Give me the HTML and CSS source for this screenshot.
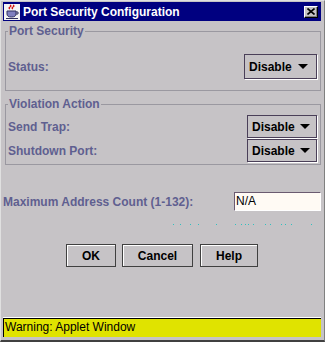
FILE: index.html
```html
<!DOCTYPE html>
<html lang="en">
<head>
  <meta charset="UTF-8" />
  <title>Port Security Configuration</title>
  <link rel="stylesheet" href="styles.css">
</head>
<body>
  <div class="window">
    <div class="titlebar">
      <svg class="app-icon" width="16" height="16" viewBox="0 0 16 16">
        <rect x="0" y="0" width="16" height="16" fill="#f4f4f4"/>
        <path d="M6 1 q2 1 0 2 q-2 1 0 2 M9 1 q2 1 0 2 q-2 1 0 2" stroke="#d00000" stroke-width="1.2" fill="none"/>
        <path d="M3 7 h9 v3 q0 3 -4.5 3 q-4.5 0 -4.5 -3 z" fill="#8080c0" stroke="#303060" stroke-width="1"/>
        <path d="M12 8 h2 v2 h-2" fill="none" stroke="#303060" stroke-width="1"/>
        <rect x="2" y="14" width="12" height="1" fill="#303060"/>
      </svg>
      <span class="title">Port Security Configuration</span>
      <span class="close-btn">
        <svg width="8" height="7" viewBox="0 0 8 7"><path d="M0.5 0.5 L7.5 6.5 M7.5 0.5 L0.5 6.5" stroke="#000" stroke-width="1.6"/></svg>
      </span>
    </div>

    <div class="content">
      <fieldset class="group group-port">
        <legend>Port Security</legend>
        <div class="row">
          <span class="label">Status:</span>
          <span class="combo combo-wide">Disable <i class="arrow"></i></span>
        </div>
      </fieldset>

      <fieldset class="group group-violation">
        <legend>Violation Action</legend>
        <div class="row row-tight">
          <span class="label">Send Trap:</span>
          <span class="combo">Disable <i class="arrow"></i></span>
        </div>
        <div class="row row-tight">
          <span class="label">Shutdown Port:</span>
          <span class="combo">Disable <i class="arrow"></i></span>
        </div>
      </fieldset>

      <div class="row row-max">
        <span class="label">Maximum Address Count (1-132):</span>
        <span class="textfield">N/A</span>
      </div>

      <div class="dots">
        <svg width="148" height="1" viewBox="0 0 148 1">
          <g fill="#30c0c0">
            <rect x="2" y="0" width="1" height="1"/>
            <rect x="9" y="0" width="1" height="1"/>
            <rect x="19" y="0" width="1" height="1"/>
            <rect x="27" y="0" width="1" height="1"/>
            <rect x="45" y="0" width="1" height="1"/>
            <rect x="64" y="0" width="1" height="1"/>
            <rect x="70" y="0" width="1" height="1"/>
            <rect x="74" y="0" width="1" height="1"/>
            <rect x="77" y="0" width="1" height="1"/>
            <rect x="82" y="0" width="1" height="1"/>
            <rect x="94" y="0" width="1" height="1"/>
            <rect x="99" y="0" width="1" height="1"/>
            <rect x="110" y="0" width="1" height="1"/>
            <rect x="114" y="0" width="1" height="1"/>
            <rect x="120" y="0" width="1" height="1"/>
            <rect x="140" y="0" width="1" height="1"/>
          </g>
        </svg>
      </div>

      <div class="buttons">
        <button class="btn btn-ok">OK</button>
        <button class="btn btn-cancel">Cancel</button>
        <button class="btn btn-help">Help</button>
      </div>
    </div>

    <div class="warning">Warning: Applet Window</div>
  </div>
</body>
</html>
```

FILE: styles.css
```css
body {
  margin: 0;
  font-family: "Liberation Sans", Arial, sans-serif;
  font-size: 12px;
  background: #c6c3c6;
}

.window {
  width: 325px;
  height: 342px;
  box-sizing: border-box;
  padding: 1px 3px 3px 2px;
  background: #c6c3c6;
  border-left: 1px solid #e0e0e0;
  border-top: 1px solid #e0e0e0;
  border-right: 1px solid #808080;
  border-bottom: 2px solid #404040;
  display: flex;
  flex-direction: column;
}

.titlebar {
  height: 19px;
  background: #000080;
  display: flex;
  align-items: center;
  padding: 0 3px 0 1px;
}

.app-icon {
  display: block;
  margin-right: 3px;
}

.title {
  color: #fff;
  font-weight: bold;
  font-size: 12px;
  flex: 1;
}

.close-btn {
  width: 14px;
  height: 12px;
  box-sizing: border-box;
  background: #c6c3c6;
  border-top: 1px solid #fff;
  border-left: 1px solid #fff;
  border-right: 1px solid #000;
  border-bottom: 1px solid #000;
  box-shadow: inset -1px -1px 0 #808080;
  display: flex;
  align-items: center;
  justify-content: center;
}

.close-btn svg {
  display: block;
}

.content {
  flex: 1;
  display: flex;
  flex-direction: column;
}

.group {
  margin: 3px 0 0 2px;
  padding: 0 2px 0 2px;
  border: 1px solid #9a98a0;
  min-width: 0;
}

.group legend {
  padding: 0 1px;
  font-weight: bold;
  color: #5f5f90;
  line-height: 14px;
}

.group-port {
  padding-top: 16px;
  padding-bottom: 11px;
}

.group-violation {
  margin-top: 6px;
  padding-top: 4px;
  padding-bottom: 2px;
}

.row {
  display: flex;
  align-items: center;
  justify-content: space-between;
}

.row-tight + .row-tight {
  margin-top: 1px;
}

.label {
  font-weight: bold;
  color: #5f5f90;
}

.combo {
  width: 70px;
  height: 23px;
  box-sizing: border-box;
  border: 1px solid #4a3f58;
  box-shadow: 1px 1px 0 #fff;
  font-weight: bold;
  color: #000;
  display: flex;
  align-items: center;
  justify-content: space-between;
  padding: 0 6px 0 4px;
  margin-right: 1px;
}

.combo-wide {
  width: 73px;
  height: 25px;
  padding-right: 8px;
}

.arrow {
  width: 0;
  height: 0;
  border-left: 5px solid transparent;
  border-right: 5px solid transparent;
  border-top: 5px solid #000;
}

.row-max {
  margin-top: 27px;
}

.textfield {
  width: 87px;
  height: 19px;
  box-sizing: border-box;
  border: 1px solid #6a5a70;
  border-right-color: #fff;
  border-bottom-color: #fff;
  background: #fffaf4;
  color: #000;
  padding-left: 1px;
  line-height: 17px;
}

.dots {
  display: flex;
  justify-content: flex-end;
  margin-top: 13px;
  padding-right: 2px;
}

.dots svg {
  display: block;
}

.buttons {
  display: flex;
  gap: 6px;
  margin-top: 19px;
  padding-left: 63px;
}

.btn {
  height: 23px;
  box-sizing: border-box;
  font-family: "Liberation Sans", Arial, sans-serif;
  font-size: 12px;
  font-weight: bold;
  color: #000;
  background: #c6c3c6;
  border: 1px solid #404040;
  box-shadow: inset 1px 1px 0 #fff;
  padding: 0;
}

.btn-ok { width: 50px; }
.btn-cancel { width: 71px; }
.btn-help { width: 58px; margin-left: 1px; }

.warning {
  height: 19px;
  box-sizing: border-box;
  margin-top: 1px;
  border-top: 1px solid #000;
  border-left: 1px solid #000;
  box-shadow: 0 -1px 0 #fff;
  background: #e0e300;
  color: #000;
  font-size: 12px;
  line-height: 17px;
  padding-left: 1px;
}
```
